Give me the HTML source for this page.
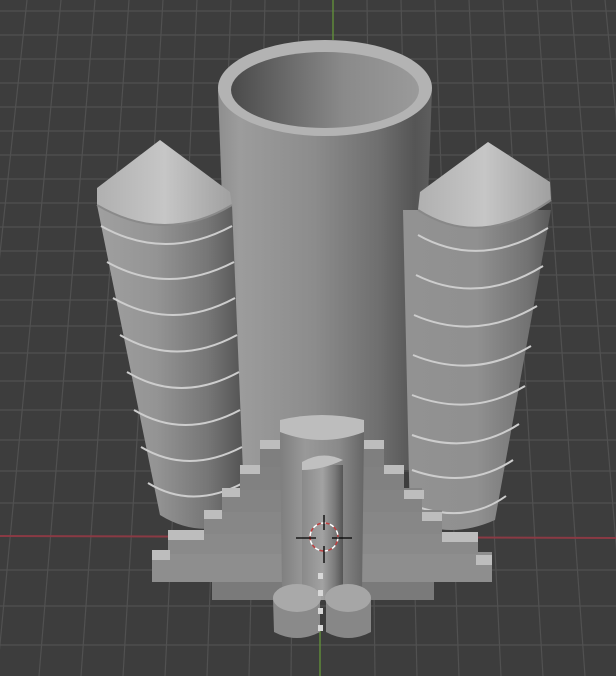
<!DOCTYPE html>
<html><head><meta charset="utf-8"><style>
html,body{margin:0;padding:0;background:#3d3d3d;overflow:hidden}
svg{display:block}
</style></head><body>
<svg width="616" height="676" viewBox="0 0 616 676" xmlns="http://www.w3.org/2000/svg">
<defs>
<linearGradient id="tube" x1="0" x2="1" y1="0" y2="0">
<stop offset="0" stop-color="#8e8e8e"/><stop offset="0.1" stop-color="#9c9c9c"/><stop offset="0.45" stop-color="#8c8c8c"/><stop offset="0.75" stop-color="#6f6f6f"/><stop offset="0.92" stop-color="#555"/><stop offset="1" stop-color="#5e5e5e"/>
</linearGradient>
<linearGradient id="inner" x1="0" x2="1">
<stop offset="0" stop-color="#4a4a4a"/><stop offset="0.3" stop-color="#6a6a6a"/><stop offset="0.6" stop-color="#8a8a8a"/><stop offset="1" stop-color="#9a9a9a"/>
</linearGradient>
<linearGradient id="silo" x1="0" x2="1">
<stop offset="0" stop-color="#a0a0a0"/><stop offset="0.4" stop-color="#949494"/><stop offset="0.75" stop-color="#767676"/><stop offset="1" stop-color="#525252"/>
</linearGradient>
<linearGradient id="siloR" x1="0" x2="1">
<stop offset="0" stop-color="#929292"/><stop offset="0.5" stop-color="#909090"/><stop offset="0.85" stop-color="#727272"/><stop offset="1" stop-color="#595959"/>
</linearGradient>
<linearGradient id="cone" x1="0" x2="1">
<stop offset="0" stop-color="#b0b0b0"/><stop offset="0.5" stop-color="#c6c6c6"/><stop offset="1" stop-color="#a0a0a0"/>
</linearGradient>
<linearGradient id="col" x1="0" x2="1">
<stop offset="0" stop-color="#7e7e7e"/><stop offset="0.3" stop-color="#999"/><stop offset="0.7" stop-color="#8a8a8a"/><stop offset="1" stop-color="#666"/>
</linearGradient>
<linearGradient id="groove" x1="0" x2="1">
<stop offset="0" stop-color="#8a8a8a"/><stop offset="0.5" stop-color="#a2a2a2"/><stop offset="0.8" stop-color="#7a7a7a"/><stop offset="1" stop-color="#555"/>
</linearGradient>
</defs>
<rect width="616" height="676" fill="#3d3d3d"/>
<g stroke="#515151" stroke-width="1.2">
<line x1="-7" y1="0" x2="-87" y2="676"/><line x1="27" y1="0" x2="-45" y2="676"/><line x1="61" y1="0" x2="-3" y2="676"/><line x1="95" y1="0" x2="39" y2="676"/><line x1="129" y1="0" x2="81" y2="676"/><line x1="163" y1="0" x2="123" y2="676"/><line x1="197" y1="0" x2="165" y2="676"/><line x1="231" y1="0" x2="207" y2="676"/><line x1="265" y1="0" x2="249" y2="676"/><line x1="299" y1="0" x2="291" y2="676"/><line x1="367" y1="0" x2="375" y2="676"/><line x1="401" y1="0" x2="417" y2="676"/><line x1="435" y1="0" x2="459" y2="676"/><line x1="469" y1="0" x2="501" y2="676"/><line x1="503" y1="0" x2="543" y2="676"/><line x1="537" y1="0" x2="585" y2="676"/><line x1="571" y1="0" x2="627" y2="676"/><line x1="605" y1="0" x2="669" y2="676"/><line x1="639" y1="0" x2="711" y2="676"/>
<line x1="0" y1="11" x2="616" y2="11"/><line x1="0" y1="35" x2="616" y2="35"/><line x1="0" y1="59" x2="616" y2="59"/><line x1="0" y1="83" x2="616" y2="83"/><line x1="0" y1="107" x2="616" y2="107"/><line x1="0" y1="131" x2="616" y2="131"/><line x1="0" y1="155" x2="616" y2="155"/><line x1="0" y1="179" x2="616" y2="179"/><line x1="0" y1="203" x2="616" y2="203"/><line x1="0" y1="227" x2="616" y2="227"/><line x1="0" y1="251" x2="616" y2="251"/><line x1="0" y1="275" x2="616" y2="275"/><line x1="0" y1="300" x2="616" y2="300"/><line x1="0" y1="326" x2="616" y2="326"/><line x1="0" y1="353" x2="616" y2="353"/><line x1="0" y1="381" x2="616" y2="381"/><line x1="0" y1="410" x2="616" y2="410"/><line x1="0" y1="440" x2="616" y2="440"/><line x1="0" y1="471" x2="616" y2="471"/><line x1="0" y1="503" x2="616" y2="503"/><line x1="0" y1="570" x2="616" y2="570"/><line x1="0" y1="606" x2="616" y2="606"/><line x1="0" y1="645" x2="616" y2="645"/>
</g>
<line x1="0" y1="536" x2="616" y2="538" stroke="#8a3a44" stroke-width="2"/>
<line x1="333" y1="0" x2="333" y2="40" stroke="#5f8a3a" stroke-width="1.5"/>
<line x1="320" y1="630" x2="320" y2="676" stroke="#5f8a3a" stroke-width="1.5"/>

<path d="M218 90 L232 470 L418 470 L432 90 Z" fill="url(#tube)"/>
<ellipse cx="325" cy="88" rx="107" ry="48" fill="#b3b3b3"/>
<ellipse cx="325" cy="90" rx="94" ry="38" fill="url(#inner)"/>

<path d="M97 205 L160 515 Q200 540 245 520 L232 205 Z" fill="url(#silo)"/>
<path d="M97 205 Q165 245 232 205 L230 192 L160 140 L97 188 Z" fill="url(#cone)"/>
<path d="M97 205 Q165 245 232 205" fill="none" stroke="#8a8a8a" stroke-width="2"/>
<g fill="none" stroke="#cdcdcd" stroke-width="2">
<path d="M101 226 Q165 262 232 226"/><path d="M107 262 Q168 296 234 262"/><path d="M113 298 Q172 332 235 298"/><path d="M120 335 Q176 368 237 335"/><path d="M127 372 Q180 404 239 372"/><path d="M134 410 Q184 440 240 410"/><path d="M141 447 Q188 475 242 447"/><path d="M148 483 Q192 510 243 483"/>
</g>

<path d="M403 210 L410 520 Q450 540 495 520 L551 210 Z" fill="url(#siloR)"/>
<path d="M418 210 Q480 250 551 200 L550 182 L488 142 L420 192 Z" fill="url(#cone)"/>
<path d="M418 210 Q480 250 551 200" fill="none" stroke="#888" stroke-width="2"/>
<g fill="none" stroke="#cdcdcd" stroke-width="2">
<path d="M418 235 Q480 270 548 228"/><path d="M416 275 Q478 306 543 266"/><path d="M414 315 Q476 342 537 306"/><path d="M413 355 Q474 380 531 346"/><path d="M412 395 Q472 418 525 386"/><path d="M412 435 Q470 456 519 424"/><path d="M412 470 Q468 490 513 460"/><path d="M412 505 Q466 525 506 496"/>
</g>

<g>
<rect x="212" y="560" width="222" height="40" fill="#7a7a7a"/>
<rect x="152" y="552" width="340" height="30" fill="#8e8e8e"/>
<rect x="168" y="532" width="310" height="22" fill="#8a8a8a"/>
<rect x="204" y="510" width="238" height="24" fill="#878787"/>
<rect x="222" y="488" width="200" height="24" fill="#848484"/>
<rect x="240" y="465" width="164" height="25" fill="#818181"/>
<rect x="260" y="440" width="124" height="27" fill="#7f7f7f"/>
<g fill="#bdbdbd">
<rect x="152" y="550" width="18" height="10"/><rect x="476" y="555" width="16" height="10"/>
<rect x="168" y="530" width="36" height="10"/><rect x="442" y="532" width="36" height="10"/>
<rect x="204" y="510" width="18" height="9"/><rect x="422" y="512" width="20" height="9"/>
<rect x="222" y="488" width="18" height="9"/><rect x="404" y="490" width="20" height="9"/>
<rect x="240" y="465" width="20" height="9"/><rect x="384" y="465" width="20" height="9"/>
<rect x="260" y="440" width="20" height="9"/><rect x="364" y="440" width="20" height="9"/>
</g>
</g>

<path d="M280 432 L282 592 L362 592 L364 432 Z" fill="url(#col)"/>
<path d="M280 432 Q322 448 364 432 L364 420 Q322 410 280 420 Z" fill="#bdbdbd"/>
<path d="M302 465 L302 600 L343 600 L343 465 Z" fill="url(#groove)"/>
<path d="M302 462 Q322 450 343 460 Q322 470 302 470 Z" fill="#c0c0c0"/>
<path d="M273 598 L274 632 Q297 644 320 632 L320 598 Z" fill="#8a8a8a"/>
<ellipse cx="297" cy="598" rx="24" ry="14" fill="#a9a9a9"/>
<path d="M326 598 L326 632 Q348 644 371 632 L371 598 Z" fill="#878787"/>
<ellipse cx="348" cy="598" rx="23" ry="14" fill="#a6a6a6"/>
<g fill="#d8d8d8"><rect x="318" y="573" width="5" height="6"/><rect x="318" y="590" width="5" height="6"/><rect x="318" y="608" width="5" height="6"/><rect x="318" y="625" width="5" height="6"/></g>

<g>
<circle cx="324" cy="537" r="14" fill="none" stroke="#fff" stroke-width="1.5" stroke-dasharray="5 4"/>
<circle cx="324" cy="537" r="14" fill="none" stroke="#c04040" stroke-width="1.5" stroke-dasharray="4 5" stroke-dashoffset="4.5"/>
<g stroke="#000" stroke-width="1.3">
<line x1="296" y1="538" x2="316" y2="538"/><line x1="332" y1="538" x2="352" y2="538"/>
<line x1="324" y1="515" x2="324" y2="530"/><line x1="324" y1="546" x2="324" y2="563"/>
</g>
</g>
</svg>
</body></html>
